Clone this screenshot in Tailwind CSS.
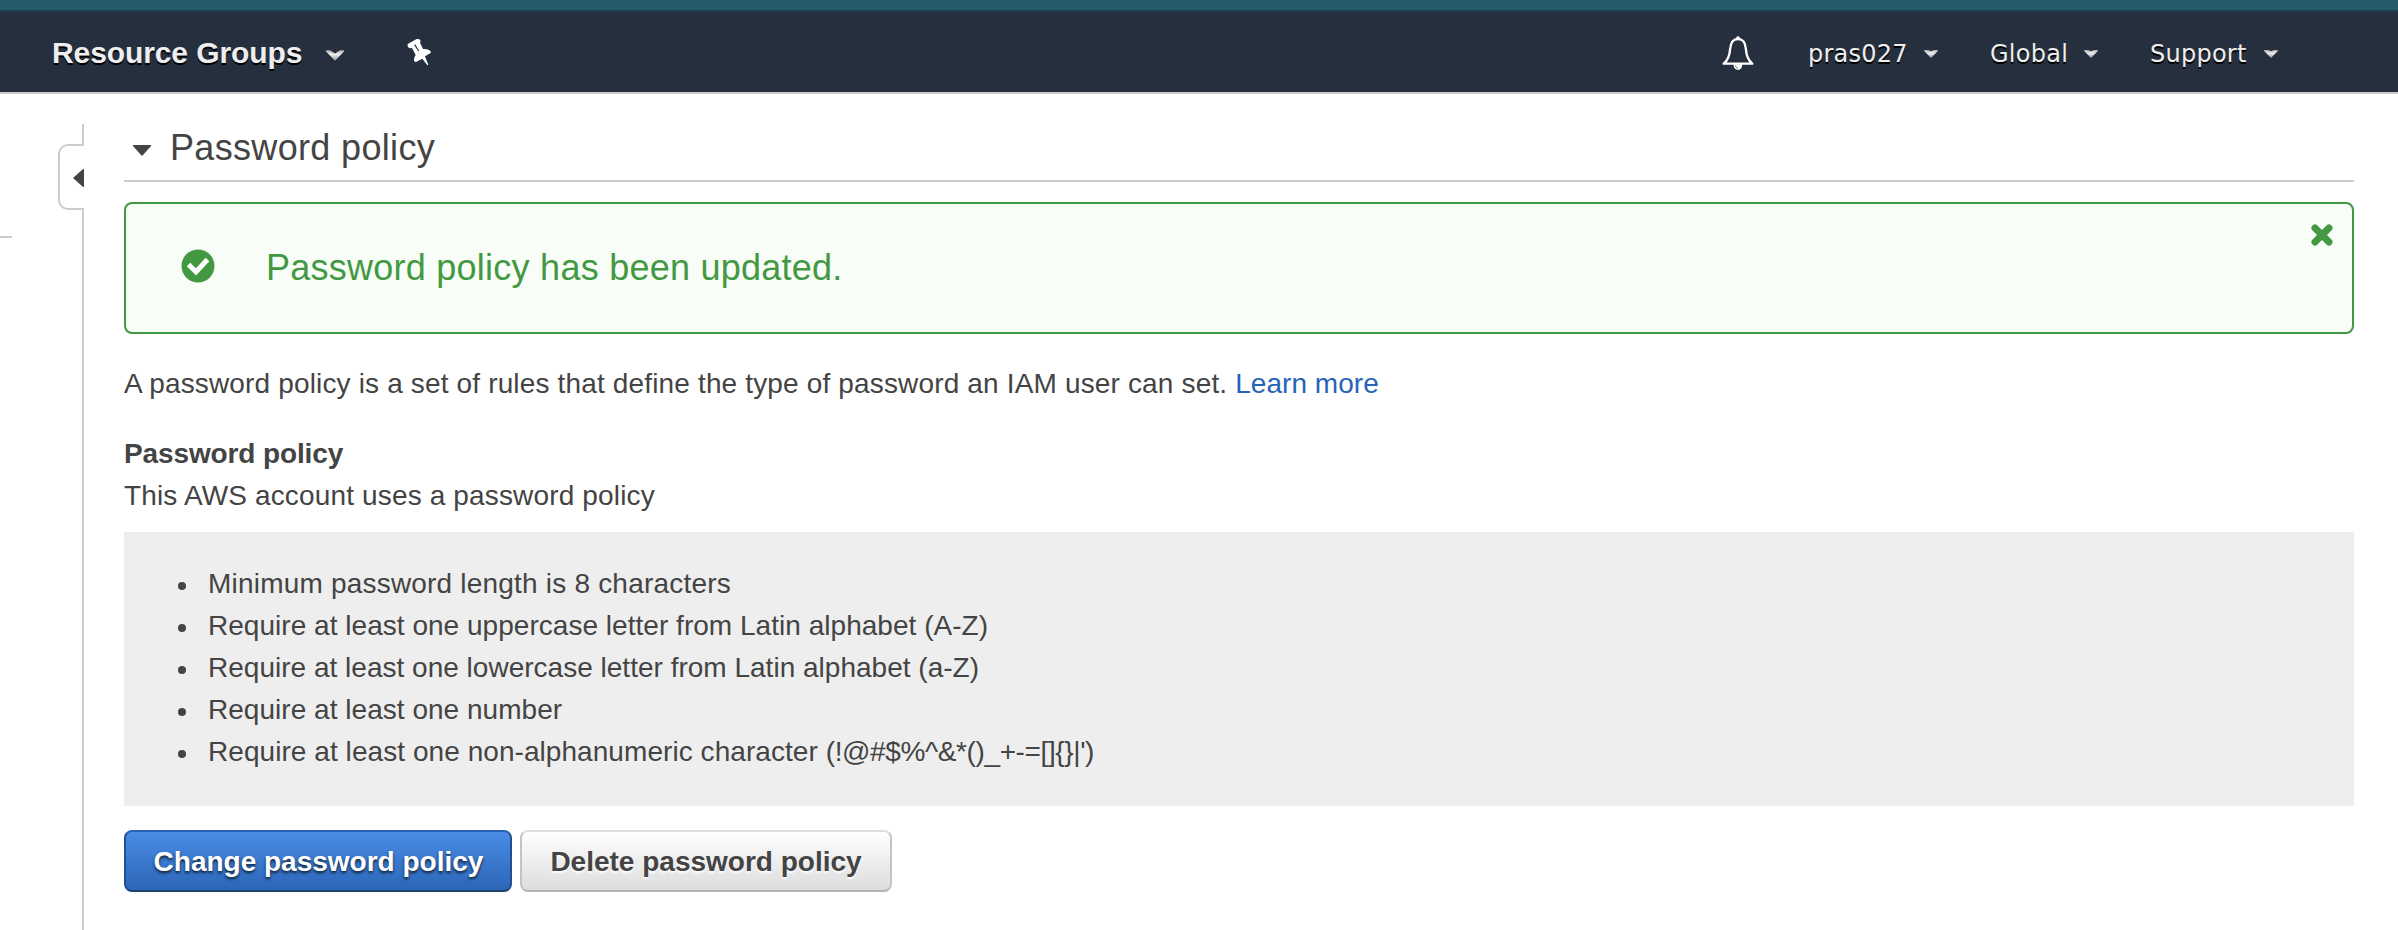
<!DOCTYPE html>
<html lang="en">
<head>
<meta charset="utf-8">
<title>Password policy</title>
<script src="https://cdn.jsdelivr.net/npm/@tailwindcss/browser@4"></script>
</head>
<body class="flex h-[930px] w-[2398px] flex-col overflow-hidden bg-white font-['Liberation_Sans',sans-serif] text-[28px] leading-[42px] text-[#444444]">
<svg width="0" height="0" class="absolute">
  <defs>
    <linearGradient id="caret" x1="0" y1="0" x2="0" y2="1">
      <stop offset="0" stop-color="#a8a8a8"/><stop offset=".4" stop-color="#eeeeee"/><stop offset="1" stop-color="#999999"/>
    </linearGradient>
  </defs>
</svg>

<header class="flex h-[94px] shrink-0 flex-col border-b-2 border-[#cccccc] bg-[#262f3e]">
  <div class="h-3 shrink-0 border-b-2 border-[#1b4150] bg-[#245a69]"></div>
  <nav class="flex h-20 items-start pl-[52px] text-[#eeeeee]">
    <div class="flex pt-[20px]">
      <span class="w-[274px] text-[30px] leading-[42px] font-bold tracking-[-0.1px] whitespace-nowrap [text-shadow:0_2px_0_#000]">Resource Groups</span>
      <svg class="mt-[18px]" width="18" height="11" viewBox="0 0 54 32"><path fill="url(#caret)" d="M0 0H12L27 10L42 0H54V4L27 32L0 4Z"/></svg>
    </div>
    <svg class="mt-[18px] ml-14" width="40" height="44" viewBox="0 0 120 132">
      <path fill="#fff" d="M23 42L50 27Q61 25 62 34L60 38L69 57Q88 56 93 66Q93 70 88 71L75 79L85 104L82 106L67 86L48 96Q41 96 42 88Q43 80 47 75L36 54L29 55Q21 50 23 42Z"/>
      <path stroke="#262f3e" stroke-width="3.5" fill="none" d="M44 44L56 63"/>
    </svg>
    <div class="flex items-start pl-[1282px] font-['DejaVu_Sans',sans-serif] text-2xl leading-[36px] tracking-[0.25px] [text-shadow:0_2px_0_#000]">
      <svg class="mt-[23px] w-[34px]" width="34" height="38" viewBox="20 30 102 114">
        <path fill="none" stroke="#fff" stroke-width="7" stroke-linejoin="round" d="M68 42C51 42 46 54 44 74C43 92 40 104 25 116H111C96 104 93 92 92 74C90 54 85 42 68 42Z"/>
        <path fill="#fff" d="M63 42V36Q68 31 73 36V42ZM54 118H81Q80 135 68 135Q56 135 54 118Z"/>
        <path fill="none" stroke="#262f3e" stroke-width="2" d="M60 122Q61 128 67 130"/>
      </svg>
      <span class="mt-[24px] ml-[52px] w-[116px] whitespace-nowrap">pras027</span>
      <svg class="mt-[38px]" width="14" height="8" viewBox="0 0 43 25"><path fill="url(#caret)" d="M0 0H13L21.500 4L30 0H43V3L21.500 25L0 3Z"/></svg>
      <span class="mt-[24px] ml-[52px] w-[94px] whitespace-nowrap">Global</span>
      <svg class="mt-[38px]" width="14" height="8" viewBox="0 0 43 25"><path fill="url(#caret)" d="M0 0H13L21.500 4L30 0H43V3L21.500 25L0 3Z"/></svg>
      <span class="mt-[24px] ml-[52px] w-[114px] whitespace-nowrap">Support</span>
      <svg class="mt-[38px]" width="14" height="8" viewBox="0 0 43 25"><path fill="url(#caret)" d="M0 0H13L21.500 4L30 0H43V3L21.500 25L0 3Z"/></svg>
    </div>
  </nav>
</header>

<div class="flex flex-1">
  <aside class="flex w-[84px] flex-col items-end pt-[30px]">
    <div class="h-5 w-0.5 bg-[#cccccc]"></div>
    <div class="flex h-[66px] w-full">
      <div class="mt-[92px] h-0.5 w-3 shrink-0 bg-[#cccccc]"></div>
      <div class="ml-[46px] flex h-[66px] w-[26px] items-center justify-end rounded-l-[10px] border-2 border-r-0 border-[#cccccc]">
        <svg class="mt-0.5" width="11" height="18" viewBox="0 0 11 18"><path fill="#444" d="M11 0V18L9.500 17.500L0 9L9.500 .5Z"/></svg>
      </div>
    </div>
    <div class="w-0.5 flex-1 bg-[#cccccc]"></div>
  </aside>

  <main class="flex flex-1 flex-col pr-11 pl-10">
    <h1 class="flex h-[88px] items-start border-b-2 border-[#cccccc] pt-[27px] pl-[9px] text-[36px] leading-[54px] tracking-[0.33px]">
      <svg class="mt-[24px] mr-[19px]" width="18" height="11" viewBox="0 0 18 11"><path fill="#444" d="M0 0H18V1L9.800 10.300Q9 11 8.200 10.300L0 1Z"/></svg>
      Password policy
    </h1>

    <div class="mt-5 flex h-[132px] items-center rounded-lg border-2 border-[#429941] bg-[#f8fdf8] pl-[55px] text-[36px] leading-[54px] tracking-[0.25px] text-[#429941]">
      <svg class="-mt-1" width="34" height="34" viewBox="0 0 34 34"><circle cx="17" cy="17" r="16.500" fill="#429941"/><path fill="none" stroke="#fff" stroke-width="5" d="M7.500 15.500L15 23L26.500 10.500"/></svg>
      <span class="ml-[51px] flex-1">Password policy has been updated.</span>
      <svg class="mt-[20px] mr-[19px] self-start" width="22" height="22" viewBox="0 0 22 22"><path stroke="#429941" stroke-width="7" stroke-linecap="round" d="M4 4L18 18M18 4L4 18"/></svg>
    </div>

    <p class="mt-[29px] tracking-[0.155px]">A password policy is a set of rules that define the type of password an IAM user can set. <a class="tracking-[0.04px] text-[#2763b8]">Learn more</a></p>

    <h2 class="mt-7 font-bold tracking-[-0.12px]">Password policy</h2>
    <p class="tracking-[0.15px]">This AWS account uses a password policy</p>

    <ul class="mt-[15px] flex h-[274px] flex-col bg-[#eeeeee] pt-[31px] pl-[54px] tracking-[0.03px]">
      <li class="flex items-center"><i class="mt-[3px] mr-[22px] size-2 rounded-full bg-[#444444]"></i><span class="tracking-[0.2px]">Minimum password length is 8 characters</span></li>
      <li class="flex items-center"><i class="mt-[3px] mr-[22px] size-2 rounded-full bg-[#444444]"></i><span>Require at least one uppercase letter from Latin alphabet (A-Z)</span></li>
      <li class="flex items-center"><i class="mt-[3px] mr-[22px] size-2 rounded-full bg-[#444444]"></i><span class="tracking-[0.01px]">Require at least one lowercase letter from Latin alphabet (a-Z)</span></li>
      <li class="flex items-center"><i class="mt-[3px] mr-[22px] size-2 rounded-full bg-[#444444]"></i><span>Require at least one number</span></li>
      <li class="flex items-center"><i class="mt-[3px] mr-[22px] size-2 rounded-full bg-[#444444]"></i><span class="tracking-[0.06px]">Require at least one non-alphanumeric character <span class="tracking-[-0.38px]">(!@#$%^&amp;*()_+-=[]{}|')</span></span></li>
    </ul>

    <div class="mt-6 flex gap-2 font-bold">
      <button class="h-[62px] w-[388px] rounded-lg border-2 border-x-[#234f8f] border-t-[#2763b8] border-b-[#1d436f] bg-linear-to-b from-[#4a8de5] to-[#2b66b8] pt-px pl-px text-white [text-shadow:0_2px_3px_#000000bf]">Change password policy</button>
      <button class="h-[62px] w-[372px] rounded-lg border-2 border-x-[#c4c4c4] border-t-[#dddddd] border-b-[#b4b4b4] bg-linear-to-b from-white to-[#dddddd] pt-px [text-shadow:0_2px_2px_#ffffff]">Delete password policy</button>
    </div>
  </main>
</div>
</body>
</html>
